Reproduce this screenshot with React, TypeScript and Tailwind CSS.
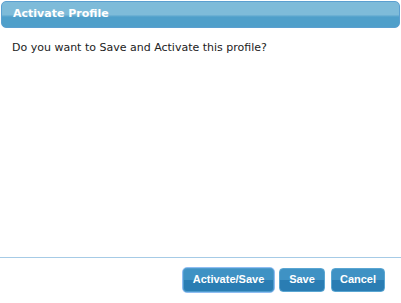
import React from 'react'

const btn =
  'h-[24px] rounded-[4px] border border-[#5aa6d2] bg-gradient-to-b from-[#3f92c4] from-50% to-[#2a7db3] to-50% text-[11px] font-bold text-white font-["Liberation_Sans",Arial,sans-serif]'

export default function App() {
  return (
    <div className="w-[401px] h-[303px] bg-white flex flex-col font-['DejaVu_Sans',Verdana,sans-serif]">
      <div className="mx-[1px] mt-[1px] h-[27px] rounded-[5px] border border-[#5b9fd0] bg-gradient-to-b from-[#7ebbd9] from-50% to-[#4f9fca] to-60% flex items-center px-[11px]">
        <span className="text-[11px] font-bold text-white">Activate Profile</span>
      </div>
      <p className="mt-[12px] ml-[12px] text-[11px] text-[#222]">
        Do you want to Save and Activate this profile?
      </p>
      <div className="flex-1" />
      <div className="border-t border-[#a6cbe6] h-[46px] flex items-center justify-end gap-[4px] pr-[16px] pb-[2px]">
        <button className={btn + ' w-[93px] h-[26px] border-[#8fbdf2] ring-1 ring-inset ring-[#4f9ccc] rounded-[5px]'}>
          Activate/Save
        </button>
        <button className={btn + ' w-[46px]'}>Save</button>
        <button className={btn + ' ml-[2px] w-[54px]'}>Cancel</button>
      </div>
    </div>
  )
}
